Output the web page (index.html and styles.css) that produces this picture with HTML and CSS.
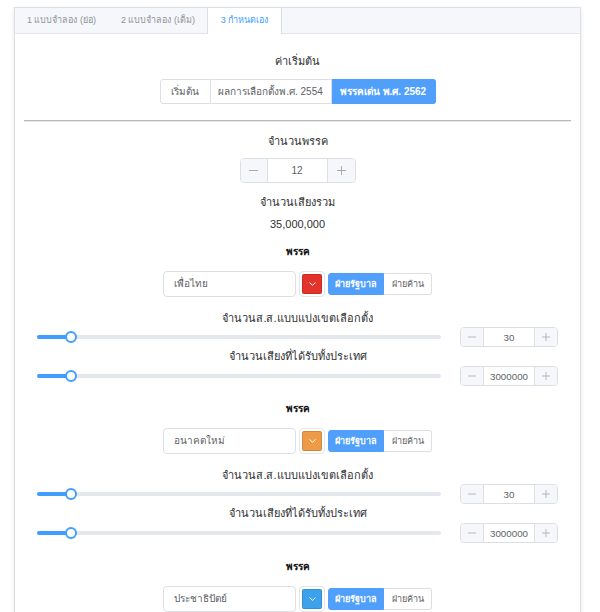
FILE: index.html
```html
<!DOCTYPE html>
<html lang="th">
<head>
<meta charset="utf-8">
<title>กำหนดเอง</title>
<link rel="stylesheet" href="styles.css">
</head>
<body>
<div class="card">
  <div class="tabs">
    <div class="tab tab-1">1 แบบจำลอง (ย่อ)</div>
    <div class="tab tab-2">2 แบบจำลอง (เต็ม)</div>
    <div class="tab tab-3 active">3 กำหนดเอง</div>
  </div>
  <div class="content">
    <div class="title title-first">ค่าเริ่มต้น</div>
    <div class="btn-group">
      <div class="btn btn-a">เริ่มต้น</div>
      <div class="btn btn-b">ผลการเลือกตั้งพ.ศ. 2554</div>
      <div class="btn btn-c primary">พรรคเด่น พ.ศ. 2562</div>
    </div>
    <div class="divider"></div>
    <div class="title title-gap">จำนวนพรรค</div>
    <div class="num num-lg">
      <div class="num-btn minus"><svg width="9" height="9" viewBox="0 0 9 9"><path d="M0 4.5H9" stroke="#a8abb2" stroke-width="1"/></svg></div>
      <div class="num-val">12</div>
      <div class="num-btn plus"><svg width="9" height="9" viewBox="0 0 9 9"><path d="M0 4.5H9M4.5 0V9" stroke="#a8abb2" stroke-width="1"/></svg></div>
    </div>
    <div class="title title-gap">จำนวนเสียงรวม</div>
    <div class="total">35,000,000</div>

    <section class="party">
      <div class="ptitle">พรรค</div>
      <div class="prow">
        <div class="pinput">เพื่อไทย</div>
        <div class="swatch"><div class="swatch-in red"><svg width="7" height="4" viewBox="0 0 7 4"><path d="M0.5 0.5L3.5 3.3L6.5 0.5" fill="none" stroke="#fff" stroke-width="1"/></svg></div></div>
        <div class="radio-group">
          <div class="radio on">ฝ่ายรัฐบาล</div>
          <div class="radio">ฝ่ายค้าน</div>
        </div>
      </div>
      <div class="slabel slabel-1">จำนวนส.ส.แบบแบ่งเขตเลือกตั้ง</div>
      <div class="srow">
        <div class="track"><div class="fill" style="width:34px"></div><div class="thumb" style="left:28px"></div></div>
        <div class="num num-sm">
          <div class="num-btn minus"><svg width="8" height="8" viewBox="0 0 8 8"><path d="M0 4H8" stroke="#b4b7bd" stroke-width="1"/></svg></div>
          <div class="num-val">30</div>
          <div class="num-btn plus"><svg width="8" height="8" viewBox="0 0 8 8"><path d="M0 4H8M4 0V8" stroke="#b4b7bd" stroke-width="1"/></svg></div>
        </div>
      </div>
      <div class="slabel slabel-2">จำนวนเสียงที่ได้รับทั้งประเทศ</div>
      <div class="srow srow-2">
        <div class="track"><div class="fill" style="width:34px"></div><div class="thumb" style="left:28px"></div></div>
        <div class="num num-sm">
          <div class="num-btn minus"><svg width="8" height="8" viewBox="0 0 8 8"><path d="M0 4H8" stroke="#b4b7bd" stroke-width="1"/></svg></div>
          <div class="num-val">3000000</div>
          <div class="num-btn plus"><svg width="8" height="8" viewBox="0 0 8 8"><path d="M0 4H8M4 0V8" stroke="#b4b7bd" stroke-width="1"/></svg></div>
        </div>
      </div>
    </section>

    <section class="party">
      <div class="ptitle">พรรค</div>
      <div class="prow">
        <div class="pinput">อนาคตใหม่</div>
        <div class="swatch"><div class="swatch-in orange"><svg width="7" height="4" viewBox="0 0 7 4"><path d="M0.5 0.5L3.5 3.3L6.5 0.5" fill="none" stroke="#fff" stroke-width="1"/></svg></div></div>
        <div class="radio-group">
          <div class="radio on">ฝ่ายรัฐบาล</div>
          <div class="radio">ฝ่ายค้าน</div>
        </div>
      </div>
      <div class="slabel slabel-1">จำนวนส.ส.แบบแบ่งเขตเลือกตั้ง</div>
      <div class="srow">
        <div class="track"><div class="fill" style="width:34px"></div><div class="thumb" style="left:28px"></div></div>
        <div class="num num-sm">
          <div class="num-btn minus"><svg width="8" height="8" viewBox="0 0 8 8"><path d="M0 4H8" stroke="#b4b7bd" stroke-width="1"/></svg></div>
          <div class="num-val">30</div>
          <div class="num-btn plus"><svg width="8" height="8" viewBox="0 0 8 8"><path d="M0 4H8M4 0V8" stroke="#b4b7bd" stroke-width="1"/></svg></div>
        </div>
      </div>
      <div class="slabel slabel-2">จำนวนเสียงที่ได้รับทั้งประเทศ</div>
      <div class="srow srow-2">
        <div class="track"><div class="fill" style="width:34px"></div><div class="thumb" style="left:28px"></div></div>
        <div class="num num-sm">
          <div class="num-btn minus"><svg width="8" height="8" viewBox="0 0 8 8"><path d="M0 4H8" stroke="#b4b7bd" stroke-width="1"/></svg></div>
          <div class="num-val">3000000</div>
          <div class="num-btn plus"><svg width="8" height="8" viewBox="0 0 8 8"><path d="M0 4H8M4 0V8" stroke="#b4b7bd" stroke-width="1"/></svg></div>
        </div>
      </div>
    </section>

    <section class="party">
      <div class="ptitle">พรรค</div>
      <div class="prow">
        <div class="pinput">ประชาธิปัตย์</div>
        <div class="swatch"><div class="swatch-in blue"><svg width="7" height="4" viewBox="0 0 7 4"><path d="M0.5 0.5L3.5 3.3L6.5 0.5" fill="none" stroke="#fff" stroke-width="1"/></svg></div></div>
        <div class="radio-group">
          <div class="radio on">ฝ่ายรัฐบาล</div>
          <div class="radio">ฝ่ายค้าน</div>
        </div>
      </div>
    </section>
  </div>
</div>
</body>
</html>
```

FILE: styles.css
```css
html, body {
  margin: 0;
  padding: 0;
  background: #fff;
  overflow: hidden;
  height: 612px;
}
body {
  font-family: "Liberation Sans", "Noto Sans", Arial, sans-serif;
  color: #303133;
}
.card {
  box-sizing: border-box;
  margin: 7px 0 0 14px;
  width: 567px;
  min-height: 640px;
  border: 1px solid #dcdfe6;
  background: #fff;
  box-shadow: 0 2px 4px rgba(0,0,0,0.08), 0 0 6px rgba(0,0,0,0.03);
}
.tabs {
  display: flex;
  height: 25px;
  background: #f5f7fa;
  border-bottom: 1px solid #e4e7ed;
}
.tab {
  box-sizing: border-box;
  height: 25px;
  line-height: 25px;
  font-size: 9px;
  text-align: center;
  color: #909399;
  border-left: 1px solid transparent;
  border-right: 1px solid transparent;
  white-space: nowrap;
}
.tab-1 { width: 94px; border-left: 0; }
.tab-2 { width: 98px; }
.tab-3 { width: 75px; }
.tab.active {
  background: #fff;
  color: #409eff;
  height: 26px;
  border-left-color: #dcdfe6;
  border-right-color: #dcdfe6;
}
.content {
  padding: 0 9px;
}
.title {
  text-align: center;
  font-size: 11px;
  line-height: 16px;
  color: #303133;
}
.title-first { margin-top: 19px; }
.title-gap { margin-top: 11px; }
.btn-group {
  display: flex;
  justify-content: center;
  margin-top: 10px;
}
.btn {
  box-sizing: border-box;
  height: 25px;
  line-height: 23px;
  text-align: center;
  font-size: 10px;
  color: #606266;
  border: 1px solid #dcdfe6;
  background: #fff;
  white-space: nowrap;
}
.btn + .btn { border-left: 0; }
.btn-a { width: 51px; border-radius: 3px 0 0 3px; }
.btn-b { width: 121px; }
.btn-c { width: 104px; border-radius: 0 3px 3px 0; }
.btn.primary {
  background: #4f9ffb;
  border-color: #4f9ffb;
  color: #fff;
  font-weight: bold;
}
.divider {
  margin-top: 16px;
  height: 0;
  border-top: 1px solid #b9b9b9;
  border-bottom: 1px solid #e8e8e8;
}
.num {
  box-sizing: border-box;
  display: flex;
  border: 1px solid #dcdfe6;
  border-radius: 4px;
  background: #fff;
  color: #606266;
}
.num-btn {
  display: flex;
  align-items: center;
  justify-content: center;
  background: #f5f7fa;
}
.num-btn.minus { border-right: 1px solid #dcdfe6; border-radius: 3px 0 0 3px; }
.num-btn.plus { border-left: 1px solid #dcdfe6; border-radius: 0 3px 3px 0; }
.num-val {
  flex: 1;
  display: flex;
  align-items: center;
  justify-content: center;
}
.num-lg {
  width: 116px;
  height: 25px;
  margin: 9px auto 0;
  font-size: 10px;
}
.num-lg .minus { width: 26px; }
.num-lg .plus { width: 27px; }
.total {
  margin-top: 6px;
  text-align: center;
  font-size: 11px;
  line-height: 16px;
  color: #303133;
}
.ptitle {
  margin-top: 12px;
  text-align: center;
  font-size: 10px;
  font-weight: bold;
  line-height: 16px;
  color: #111;
}
.party + .party .ptitle { margin-top: 15px; }
.party + .party + .party .ptitle { margin-top: 16px; }
.prow {
  display: flex;
  justify-content: center;
  align-items: center;
  margin-top: 11px;
  height: 26px;
}
.pinput {
  box-sizing: border-box;
  width: 133px;
  height: 26px;
  line-height: 24px;
  padding-left: 10px;
  border: 1px solid #dcdfe6;
  border-radius: 4px;
  font-size: 10px;
  color: #606266;
}
.swatch {
  box-sizing: border-box;
  width: 26px;
  height: 26px;
  margin-left: 3px;
  padding: 2px;
  border: 1px solid #e6e6e6;
  border-radius: 4px;
}
.swatch-in {
  box-sizing: border-box;
  width: 20px;
  height: 20px;
  border: 1px solid rgba(0,0,0,0.12);
  border-radius: 2px;
  display: flex;
  align-items: center;
  justify-content: center;
}
.red { background: #e3332a; }
.orange { background: #ee9b47; }
.blue { background: #3da2ec; }
.radio-group {
  display: flex;
  margin-left: 3px;
  height: 22px;
}
.radio {
  box-sizing: border-box;
  height: 22px;
  line-height: 20px;
  font-size: 9px;
  text-align: center;
  color: #606266;
  border: 1px solid #dcdfe6;
  border-left: 0;
  width: 48px;
  border-radius: 0 3px 3px 0;
}
.radio.on {
  width: 56px;
  background: #4f9ffb;
  border: 1px solid #4f9ffb;
  color: #fff;
  font-weight: bold;
  border-radius: 3px 0 0 3px;
}
.slabel {
  text-align: center;
  font-size: 11px;
  line-height: 16px;
  color: #303133;
}
.slabel-1 { margin-top: 13px; }
.slabel-2 { margin-top: 1px; }
.srow {
  display: flex;
  align-items: center;
  height: 20px;
  margin-top: 1px;
  padding: 0 13px;
}
.srow-2 { margin-top: 2px; }
.track {
  position: relative;
  flex: 1;
  height: 4px;
  border-radius: 2px;
  background: #e4e7ed;
  margin-right: 19px;
}
.fill {
  height: 4px;
  border-radius: 2px 0 0 2px;
  background: #409eff;
}
.thumb {
  position: absolute;
  top: -4px;
  box-sizing: border-box;
  width: 12px;
  height: 12px;
  border: 2px solid #409eff;
  border-radius: 50%;
  background: #fff;
}
.num-sm {
  width: 98px;
  height: 20px;
  font-size: 9.75px;
}
.num-sm .minus, .num-sm .plus { width: 22px; }
```
